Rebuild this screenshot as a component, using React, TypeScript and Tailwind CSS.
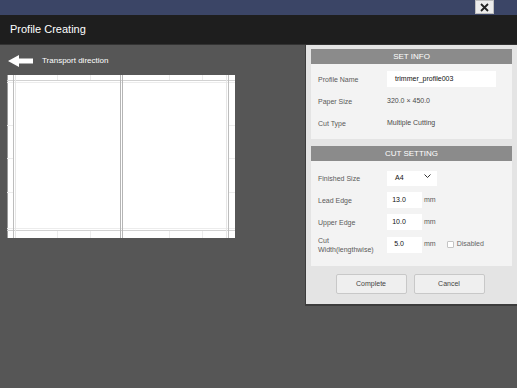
import React from 'react';

const font = { fontFamily: '"Liberation Sans", Arial, sans-serif' };

const Row = ({ label, children, h = 'h-[22px]' }: { label: React.ReactNode; children?: React.ReactNode; h?: string }) => (
  <div className={`flex items-center ${h}`}>
    <div className="w-[69px] shrink-0 text-[7px] leading-[9px] text-[#5a5a5a]">{label}</div>
    {children}
  </div>
);

const NumInput = ({ value }: { value: string }) => (
  <div className="flex h-[16px] w-[35px] items-center justify-center bg-white pr-[11px] text-[7px] text-[#111]">
    {value}
  </div>
);

const PaperDiagram = () => (
  <svg width="228" height="163" viewBox="0 0 228 163" className="block">
    <rect x="0" y="0" width="228" height="163" fill="#ffffff" />
    <line x1="0.5" y1="0" x2="0.5" y2="163" stroke="#9a9a9a" />
    <line x1="0" y1="5.5" x2="228" y2="5.5" stroke="#d2d2d2" />
    <line x1="0" y1="155.5" x2="228" y2="155.5" stroke="#d2d2d2" />
    <line x1="0" y1="7.5" x2="228" y2="7.5" stroke="#ececec" />
    <line x1="0" y1="153.5" x2="228" y2="153.5" stroke="#ececec" />
    <line x1="6.5" y1="0" x2="6.5" y2="163" stroke="#bdbdbd" />
    <line x1="8.5" y1="0" x2="8.5" y2="163" stroke="#e6e6e6" />
    <line x1="113.5" y1="0" x2="113.5" y2="163" stroke="#b5b5b5" />
    <line x1="115.5" y1="0" x2="115.5" y2="163" stroke="#b5b5b5" />
    <line x1="221.5" y1="0" x2="221.5" y2="163" stroke="#bdbdbd" />
    <line x1="219.5" y1="0" x2="219.5" y2="163" stroke="#e6e6e6" />
    {[50, 83, 117].map((y) => (
      <g key={y}>
        <line x1="0" y1={y + 0.5} x2="6" y2={y + 0.5} stroke="#ececec" />
        <line x1="222" y1={y + 0.5} x2="228" y2={y + 0.5} stroke="#ececec" />
      </g>
    ))}
    {[50, 83, 162, 195].map((x) => (
      <g key={x}>
        <line x1={x + 0.5} y1="0" x2={x + 0.5} y2="5" stroke="#ececec" />
        <line x1={x + 0.5} y1="156" x2={x + 0.5} y2="163" stroke="#ececec" />
      </g>
    ))}
  </svg>
);

export default function App() {
  return (
    <div className="flex h-[388px] w-[517px] flex-col overflow-hidden bg-[#565656]" style={font}>
      <div className="flex h-[15px] shrink-0 items-start justify-end bg-[#3b4566] pr-[23px]">
        <button className="flex h-[14px] w-[19px] items-center justify-center border border-[#bfbfbf] bg-[#ececec]">
          <svg width="9" height="9" viewBox="0 0 9 9">
            <path d="M1 1 L8 8 M8 1 L1 8" stroke="#222" strokeWidth="1.8" />
          </svg>
        </button>
      </div>
      <div className="flex h-[30px] shrink-0 items-center border-b border-[#333] bg-[#1e1e1e] pl-[10px] text-[11px] text-white">
        Profile Creating
      </div>
      <div className="flex flex-1 items-start">
        <div className="flex w-[305px] flex-col pl-[7px] pt-[10px]">
          <div className="flex h-[12px] items-center">
            <svg width="25" height="12" viewBox="0 0 25 12" className="ml-[1px]">
              <path d="M0 6 L11 0 L11 3.5 L25 3.5 L25 8.5 L11 8.5 L11 12 Z" fill="#ffffff" />
            </svg>
            <span className="ml-[9px] text-[8px] text-white">Transport direction</span>
          </div>
          <div className="mt-[8px]">
            <PaperDiagram />
          </div>
        </div>
        <div className="flex w-[212px] flex-col border-b-2 border-l border-[#3c3c3c] bg-[#e4e4e4] px-[5px] pb-[10px] pt-[4px]">
          <div className="flex h-[15px] items-center justify-center bg-[#8b8b8b] text-[8px] text-white">SET INFO</div>
          <div className="h-[75px] bg-[#f3f3f3] pl-[7px] pt-[4px]">
            <Row label="Profile Name">
              <div className="flex h-[16px] w-[109px] items-center bg-white pl-[8px] text-[7px] text-[#111]">trimmer_profile003</div>
            </Row>
            <Row label="Paper Size">
              <span className="text-[7px] text-[#4a4a4a]">320.0 × 450.0</span>
            </Row>
            <Row label="Cut Type">
              <span className="text-[7px] text-[#4a4a4a]">Multiple Cutting</span>
            </Row>
          </div>
          <div className="mt-[7px] flex h-[15px] items-center justify-center bg-[#8b8b8b] text-[8px] text-white">CUT SETTING</div>
          <div className="h-[105px] bg-[#f3f3f3] pl-[7px] pt-[6px]">
            <Row label="Finished Size">
              <div className="flex h-[15px] w-[50px] items-center justify-between bg-white pl-[8px] pr-[6px] text-[7px] text-[#111]">
                <span>A4</span>
                <svg width="7" height="5" viewBox="0 0 7 5" className="-mt-[3px]">
                  <path d="M0.5 0.5 L3.5 3.5 L6.5 0.5" fill="none" stroke="#333" strokeWidth="1" />
                </svg>
              </div>
            </Row>
            <Row label="Lead Edge">
              <NumInput value="13.0" />
              <span className="ml-[2px] text-[7px] text-[#5a5a5a]">mm</span>
            </Row>
            <Row label="Upper Edge">
              <NumInput value="10.0" />
              <span className="ml-[2px] text-[7px] text-[#5a5a5a]">mm</span>
            </Row>
            <Row label={<>Cut<br />Width(lengthwise)</>} h="h-[23px]">
              <NumInput value="5.0" />
              <span className="ml-[2px] text-[7px] text-[#5a5a5a]">mm</span>
              <div className="ml-[11px] h-[7px] w-[7px] rounded-[1px] border border-[#c4c4c4] bg-white" />
              <span className="ml-[3px] text-[7px] text-[#666]">Disabled</span>
            </Row>
          </div>
          <div className="mt-[8px] flex justify-center gap-[7px] pr-[3px]">
            <button className="flex h-[20px] w-[71px] items-center justify-center rounded-[2px] border border-[#c8c8c8] bg-[#efefef] text-[7px] text-[#444]">Complete</button>
            <button className="flex h-[20px] w-[71px] items-center justify-center rounded-[2px] border border-[#c8c8c8] bg-[#efefef] text-[7px] text-[#444]">Cancel</button>
          </div>
        </div>
      </div>
    </div>
  );
}
